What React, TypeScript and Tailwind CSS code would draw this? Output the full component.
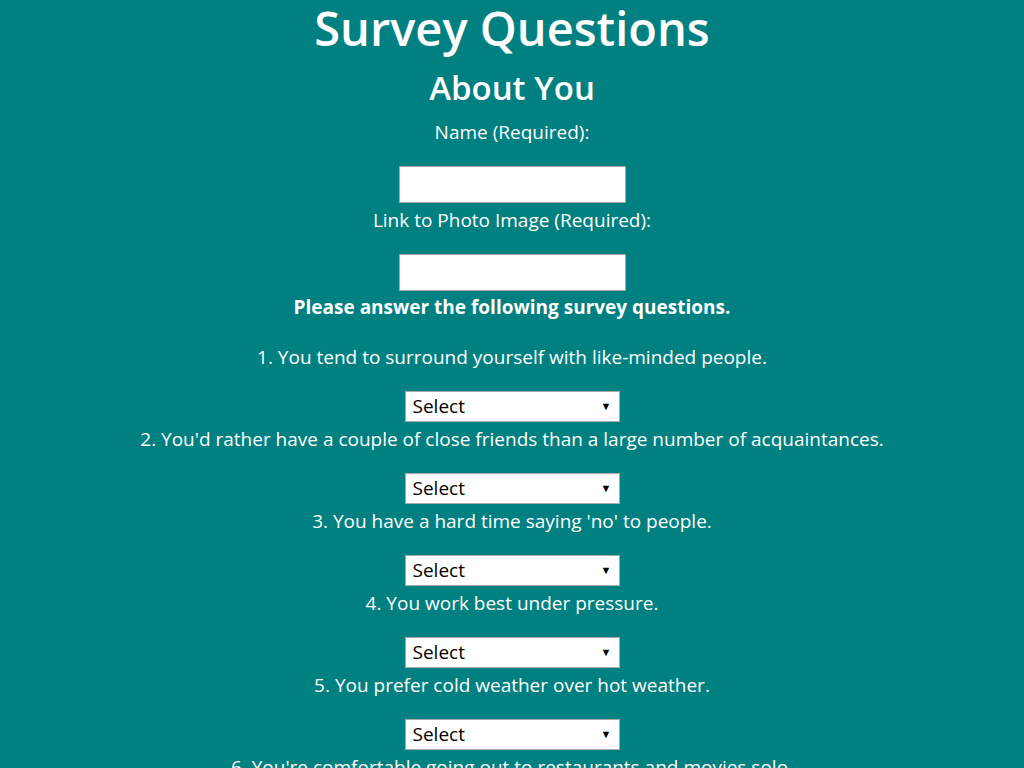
import React from 'react'

const QUESTIONS = [
  "1. You tend to surround yourself with like-minded people.",
  "2. You'd rather have a couple of close friends than a large number of acquaintances.",
  "3. You have a hard time saying 'no' to people.",
  "4. You work best under pressure.",
  "5. You prefer cold weather over hot weather.",
  "6. You're comfortable going out to restaurants and movies solo.",
  "7. You enjoy planning trips more than being spontaneous.",
]

function Dropdown() {
  return (
    <div className="relative w-[215px] h-[31px] mt-[22px] mb-[5px]">
      <select
        defaultValue=""
        className="appearance-none w-full h-full bg-white border border-[#a9a9a9] text-black text-[19px] leading-none pl-[7px] outline-none"
      >
        <option value="">Select</option>
        <option value="1">1 (Strongly Disagree)</option>
        <option value="2">2</option>
        <option value="3">3</option>
        <option value="4">4</option>
        <option value="5">5 (Strongly Agree)</option>
      </select>
      <span className="pointer-events-none absolute right-[8px] top-[9px] text-[11px] leading-none text-black">▼</span>
    </div>
  )
}

export default function App() {
  return (
    <div className="min-h-screen bg-[#008080] text-white text-center font-['Open_Sans',sans-serif] text-[19px] leading-[24px] flex flex-col items-center">
      <h1 className="text-[47px] leading-[52px] font-semibold mt-[2px]">Survey Questions</h1>
      <h2 className="text-[33px] leading-[40px] font-semibold mt-[14px]">About You</h2>

      <p className="mt-[12px]">Name (Required):</p>
      <input type="text" className="mt-[22px] w-[227px] h-[37px] bg-white border border-[#a9a9a9] outline-none text-black" />
      <p className="mt-[5px]">Link to Photo Image (Required):</p>
      <input type="text" className="mt-[22px] w-[227px] h-[37px] bg-white border border-[#a9a9a9] outline-none text-black" />

      <p className="mt-[4px] font-bold">Please answer the following survey questions.</p>

      <div className="mt-[26px] flex flex-col items-center">
        {QUESTIONS.map((q) => (
          <React.Fragment key={q}>
            <p>{q}</p>
            <Dropdown />
          </React.Fragment>
        ))}
      </div>
    </div>
  )
}
